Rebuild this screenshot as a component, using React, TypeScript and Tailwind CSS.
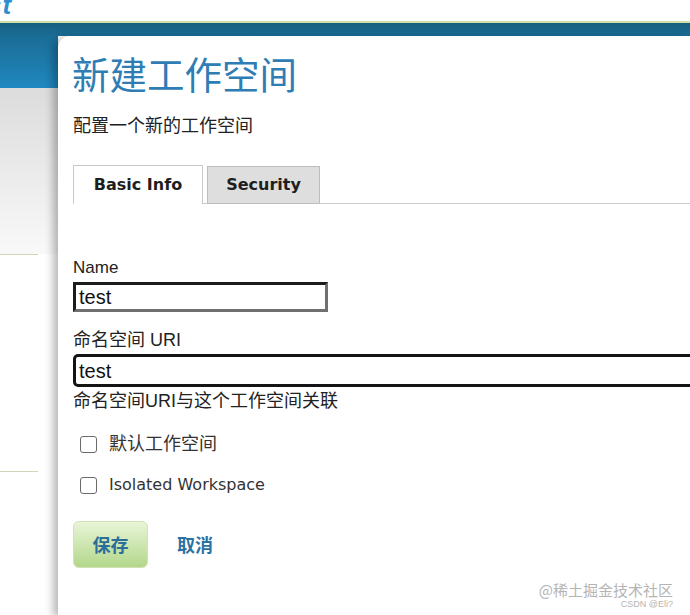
import React from "react";

const cjk = "font-['Liberation_Sans','Noto_Sans_CJK_SC',sans-serif]";
const tah = "font-['DejaVu_Sans','Noto_Sans_CJK_SC',sans-serif]";

export default function App() {
  return (
    <div className={`w-[690px] h-[615px] overflow-hidden relative bg-white ${cjk}`}>
      {/* top white bar with cut logo */}
      <div className="h-[21px] bg-white overflow-hidden">
        <div className="-ml-[13px] -mt-[8px] text-[26px] leading-[26px] font-bold italic text-[#2c8fd0] tracking-[1px]">st</div>
      </div>
      <div className="h-[2px] bg-[#cfe2a6]" />
      <div className="h-[13px] bg-gradient-to-b from-[#175f80] to-[#1a6d95]" />
      <div className="flex h-[579px]">
        {/* left sidebar */}
        <div className="w-[58px] flex flex-col">
          <div className="h-[52px] bg-gradient-to-b from-[#1a6d95] to-[#2088c0]" />
          <div className="h-[166px] bg-gradient-to-b from-[#dcdcdc] to-[#f9f9f9]" />
          <div className="w-[38px] h-[1px] bg-[#d4d4bc]" />
          <div className="h-[216px]" />
          <div className="w-[38px] h-[1px] bg-[#d4d4bc]" />
        </div>
        {/* panel */}
        <div className="flex-1 bg-white rounded-tl-[12px] shadow-[-5px_2px_8px_rgba(0,0,0,0.28)] pl-[15px] overflow-hidden relative">
          <h1 className="text-[37.5px] leading-[44px] text-[#2f7db5] font-['Noto_Sans_CJK_SC',sans-serif] font-normal mt-[15px] -ml-[1px]">新建工作空间</h1>
          <p className="text-[18px] leading-[24px] text-[#222] mt-[19px]">配置一个新的工作空间</p>

          {/* tabs */}
          <div className="flex mt-[27px] h-[39px] items-end">
            <div className={`h-[39px] w-[130px] border border-[#c8c8c8] border-b-0 bg-white flex items-center justify-center text-[16px] font-bold text-[#1e1e1e] ${tah}`}>
              Basic Info
            </div>
            <div className="w-[4px] h-[1px] bg-[#cccccc]" />
            <div className={`h-[38px] w-[113px] border border-[#bdbdbd] bg-[#dedede] flex items-center justify-center text-[16px] font-bold text-[#1e1e1e] ${tah}`}>
              Security
            </div>
            <div className="flex-1 h-[1px] bg-[#cccccc]" />
          </div>

          {/* Name */}
          <div className="mt-[53px] text-[17px] leading-[22px] text-[#222]">Name</div>
          <div className="mt-[3px] w-[255px] h-[30px] border-[3px] border-t-[#1c1c1c] border-l-[#1c1c1c] border-r-[#707070] border-b-[#707070] flex items-center pl-[3px] text-[20px] text-[#111] font-['Liberation_Sans',sans-serif]">
            test
          </div>

          {/* URI */}
          <div className="mt-[17px] text-[18px] leading-[22px] text-[#222]">命名空间 URI</div>
          <div className="mt-[3px] w-[640px] h-[33px] border-[3px] border-[#141414] rounded-[5px] flex items-center pl-[3px] text-[20px] text-[#111] font-['Liberation_Sans',sans-serif]">
            test
          </div>
          <div className="mt-[2px] text-[18px] leading-[24px] text-[#222]">命名空间URI与这个工作空间关联</div>

          {/* checkboxes */}
          <label className="flex items-center mt-[20px] h-[22px]">
            <span className="ml-[7px] w-[17px] h-[17px] border-[1.5px] border-[#6a6a6a] rounded-[3px] bg-white" />
            <span className="ml-[12px] text-[18px] text-[#333]">默认工作空间</span>
          </label>
          <label className="flex items-center mt-[19px] h-[22px]">
            <span className="ml-[7px] w-[17px] h-[17px] border-[1.5px] border-[#6a6a6a] rounded-[3px] bg-white" />
            <span className={`ml-[12px] text-[16px] text-[#333] ${tah}`}>Isolated Workspace</span>
          </label>

          {/* buttons */}
          <div className="flex items-center mt-[25px]">
            <button className="w-[75px] h-[47px] rounded-[6px] border border-[#cfe3b4] bg-gradient-to-b from-[#e9f5d8] to-[#b3d78a] text-[18px] font-bold text-[#2b6f99] font-['Noto_Sans_CJK_SC',sans-serif]">
              保存
            </button>
            <span className="ml-[29px] text-[18px] font-bold text-[#2b72a2] font-['Noto_Sans_CJK_SC',sans-serif]">取消</span>
          </div>

          {/* watermark */}
          <div className="absolute right-[17px] bottom-[6px] flex flex-col items-end">
            <div className="text-[15px] leading-[16px] text-[#b4b4b4] font-['Noto_Sans_CJK_SC',sans-serif]">@稀土掘金技术社区</div>
            <div className="mt-[2px] text-[9px] leading-[9px] text-[#b4b4b4] font-['Liberation_Sans',sans-serif]">CSDN @Eli?</div>
          </div>
        </div>
      </div>
    </div>
  );
}
